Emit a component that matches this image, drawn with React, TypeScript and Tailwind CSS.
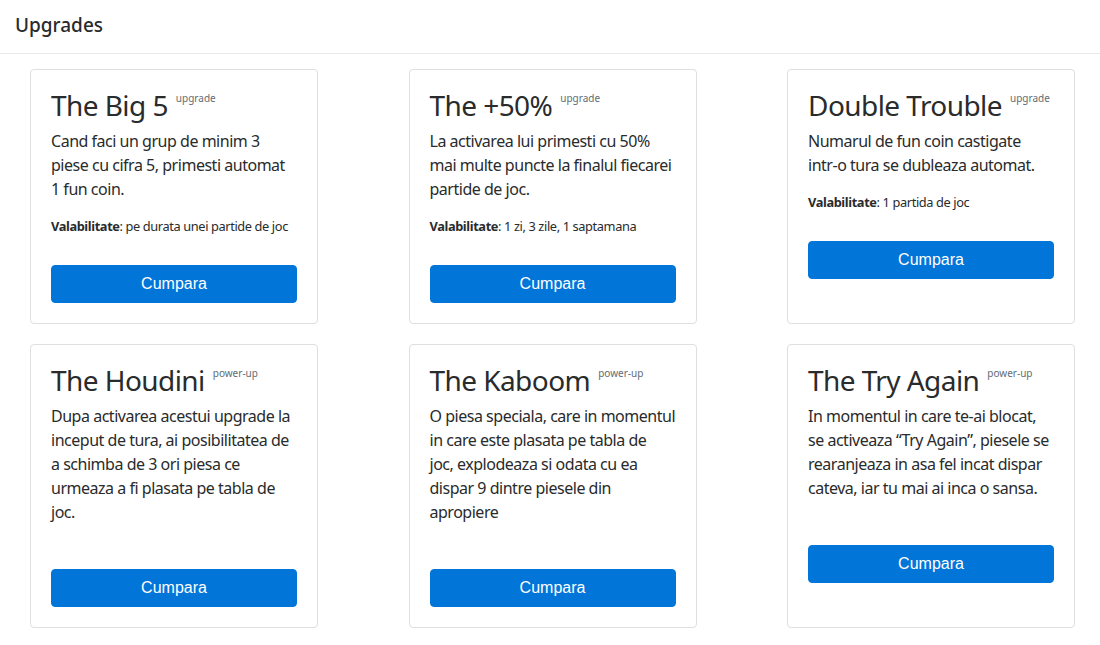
import React from 'react';

interface Upgrade {
  title: string;
  tag: string;
  lines: string[];
  validity?: string;
}

// lines are split the way the original page wraps them
const upgrades: Upgrade[] = [
  {
    title: 'The Big 5',
    tag: 'upgrade',
    lines: ['Cand faci un grup de minim 3', 'piese cu cifra 5, primesti automat', '1 fun coin.'],
    validity: 'pe durata unei partide de joc',
  },
  {
    title: 'The +50%',
    tag: 'upgrade',
    lines: ['La activarea lui primesti cu 50%', 'mai multe puncte la finalul fiecarei', 'partide de joc.'],
    validity: '1 zi, 3 zile, 1 saptamana',
  },
  {
    title: 'Double Trouble',
    tag: 'upgrade',
    lines: ['Numarul de fun coin castigate', 'intr-o tura se dubleaza automat.'],
    validity: '1 partida de joc',
  },
  {
    title: 'The Houdini',
    tag: 'power-up',
    lines: [
      'Dupa activarea acestui upgrade la',
      'inceput de tura, ai posibilitatea de',
      'a schimba de 3 ori piesa ce',
      'urmeaza a fi plasata pe tabla de',
      'joc.',
    ],
  },
  {
    title: 'The Kaboom',
    tag: 'power-up',
    lines: [
      'O piesa speciala, care in momentul',
      'in care este plasata pe tabla de',
      'joc, explodeaza si odata cu ea',
      'dispar 9 dintre piesele din',
      'apropiere',
    ],
  },
  {
    title: 'The Try Again',
    tag: 'power-up',
    lines: [
      'In momentul in care te-ai blocat,',
      'se activeaza \u201cTry Again\u201d, piesele se',
      'rearanjeaza in asa fel incat dispar',
      'cateva, iar tu mai ai inca o sansa.',
    ],
  },
];

const UpgradeCard: React.FC<{ item: Upgrade }> = ({ item }) => (
  <div className="flex flex-col rounded-[4px] border border-[#dfdfdf] bg-white p-5">
    <h3 className="mb-2 whitespace-nowrap text-[28px] font-normal leading-[1.1] tracking-[-0.02em] text-[#292b2c]">
      {item.title}
      <span className="relative top-[3px] ml-[8px] align-top text-[10px] leading-none tracking-normal text-[#636c72]">
        {item.tag}
      </span>
    </h3>
    <p className="mb-4 text-[16px] leading-[24px] tracking-[-0.03em] text-[#292b2c]">
      {item.lines.map((l) => (
        <span key={l} className="block whitespace-nowrap">
          {l}
        </span>
      ))}
    </p>
    {item.validity ? (
      <p className="mb-4 whitespace-nowrap text-[12.8px] leading-[19.2px] tracking-[-0.03em] text-[#292b2c]">
        <b className="font-bold">Valabilitate</b>: {item.validity}
      </p>
    ) : (
      <div className="h-4" />
    )}
    <button
      className="mt-[13px] w-full rounded-[4px] border border-[#0275d8] bg-[#0275d8] py-[6px] text-[16px] leading-[24px] text-white"
      style={{ fontFamily: '"Liberation Sans", Arial, sans-serif' }}
    >
      Cumpara
    </button>
  </div>
);

export default function App() {
  return (
    <div className="min-h-screen bg-white font-['Noto_Sans',sans-serif] text-[#292b2c]">
      <div className="border-b border-[#e9e9e9] px-[15px] pb-[14px] pt-[12px]">
        <h1 className="text-[19px] font-medium leading-[27px]">Upgrades</h1>
      </div>
      <div className="grid grid-cols-[288px_288px_288px] gap-x-[90.5px] gap-y-[20px] px-[30px] pt-[15px]">
        {upgrades.map((u) => (
          <UpgradeCard key={u.title} item={u} />
        ))}
      </div>
    </div>
  );
}
